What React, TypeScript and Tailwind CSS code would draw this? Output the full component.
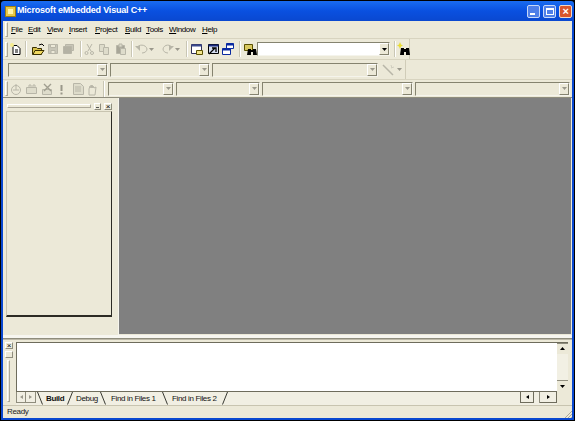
import React from "react";

function Arrow({ on = false }: { on?: boolean }) {
  return (
    <svg width="5" height="3" viewBox="0 0 5 3">
      <path d="M0 0h5L2.5 3z" fill={on ? "#000" : "#9a988c"} />
    </svg>
  );
}

function Combo({ w, on = false }: { w: string; on?: boolean }) {
  return (
    <div
      className={`${w} h-[14px] shrink-0 flex justify-end items-center border border-t-[#85836f] border-l-[#85836f] border-r-[#f5f4ec] border-b-[#f5f4ec] ${on ? "bg-white" : "bg-[#ece9d8]"}`}
    >
      <div className="w-[10px] h-[12px] flex items-center justify-center bg-[#ece9d8] border-r border-b border-r-[#85836f] border-b-[#85836f] border-t border-l border-t-white border-l-white">
        <Arrow on={on} />
      </div>
    </div>
  );
}

function Sep({ m }: { m: string }) {
  return <div className={`${m} w-[2px] h-[16px] shrink-0 border-l border-l-[#c9c6b4] border-r border-r-white`} />;
}

function Ico({ children, w = 15 }: { children: React.ReactNode; w?: number }) {
  return (
    <svg width={w} height="14" viewBox={`0 0 ${w} 14`} className="shrink-0">
      {children}
    </svg>
  );
}

const gr = "#b8b6a8";
const IconNew = () => (
  <Ico>
    <path d="M5 3.5h4l3 3v6H5z" fill="#fff" stroke="#000" />
    <path d="M7 8h3M7 10h3" stroke="#000" />
    <circle cx="4" cy="3" r="2" fill="#f6ec8c" />
  </Ico>
);
const IconOpen = () => (
  <Ico>
    <path d="M1.5 12.5v-7h4l1 1h4v6z" fill="#d8c24c" stroke="#3a3000" />
    <path d="M2 12.5l2-4h9l-3 4z" fill="#f0d860" stroke="#3a3000" />
    <path d="M8 3l3-1 2 2" stroke="#000" fill="none" />
  </Ico>
);
const IconSave = () => (
  <Ico>
    <path d="M2.5 2.5h9v9h-9z" fill="#c8c6b8" stroke={gr} />
    <path d="M4.5 2.5h5v3h-5zM5 8.5h4v3H5z" fill="#ece9d8" stroke={gr} />
  </Ico>
);
const IconSaveAll = () => (
  <Ico>
    <path d="M4.5 2.5h8v6h-8z" fill="#c8c6b8" stroke={gr} />
    <path d="M2.5 4.5h8v7h-8z" fill="#b4b2a4" stroke={gr} />
  </Ico>
);
const IconCut = () => (
  <Ico>
    <path d="M5 2l4 7M10 2L6 9" stroke={gr} fill="none" />
    <circle cx="4.5" cy="11" r="1.5" fill="none" stroke={gr} />
    <circle cx="10" cy="11" r="1.5" fill="none" stroke={gr} />
  </Ico>
);
const IconCopy = () => (
  <Ico>
    <path d="M2.5 2.5h5v7h-5z" fill="#dedccb" stroke={gr} />
    <path d="M6.5 5.5h5v7h-5z" fill="#dedccb" stroke={gr} />
  </Ico>
);
const IconPaste = () => (
  <Ico>
    <path d="M2.5 3.5h8v8h-8z" fill="#a8a698" stroke={gr} />
    <path d="M5 2h3v3H5z" fill="#dedccb" stroke={gr} />
    <path d="M6.5 6.5h5v6h-5z" fill="#dedccb" stroke={gr} />
  </Ico>
);
const IconUndo = () => (
  <Ico w={13}>
    <path d="M2 6c1-4 9-4 10 1 0 2-2 4-5 4" fill="none" stroke={gr} />
    <path d="M0 4h5v5z" fill={gr} />
  </Ico>
);
const IconRedo = () => (
  <Ico w={13}>
    <path d="M11 6C10 2 3 2 2 7c0 2 2 4 5 4" fill="none" stroke={gr} />
    <path d="M13 4H8v5z" fill={gr} />
  </Ico>
);
const IconWs = () => (
  <Ico>
    <path d="M1.5 2.5h10v9h-10z" fill="#fff" stroke="#30305a" />
    <path d="M1.5 2.5h10v2h-10z" fill="#3a4a90" />
    <path d="M6.5 8.5h6v4h-6z" fill="#f2e48c" stroke="#5a5000" />
  </Ico>
);
const IconOut = () => (
  <Ico>
    <path d="M2.5 2.5h10v9h-10z" fill="#d4dcf0" stroke="#000" />
    <path d="M2.5 2.5h10v2h-10z" fill="#1a2a80" />
    <path d="M3 12l6-6M6 6h4v4" stroke="#000" strokeWidth="1.3" fill="none" />
  </Ico>
);
const IconWin = () => (
  <Ico>
    <path d="M5.5 1.5h7v5h-7z" fill="#fff" stroke="#0a2aa0" />
    <path d="M1.5 6.5h8v6h-8z" fill="#fff" stroke="#0a2aa0" />
    <path d="M5.5 1.5h7v2h-7zM1.5 6.5h8v2h-8z" fill="#0a2aa0" />
  </Ico>
);
const IconFind = () => (
  <Ico>
    <path d="M1.5 2.5h8v6h-8z" fill="#d8c860" stroke="#5a5000" />
    <path d="M5 7h3v6H4zM10 7h3l1 6h-4z" fill="#000" />
    <path d="M7 8h4v2H7z" fill="#000" />
  </Ico>
);
const IconBino = () => (
  <Ico>
    <path d="M2 0l1 2.5 2 1-2 1L2 7 1 4.5l-2-1 2-1z" fill="#e8dc30" transform="translate(2 0)" />
    <path d="M5 6h3v7H4zM10 6h3l1 7h-4z" fill="#000" />
    <path d="M7 7h4v3H7z" fill="#000" />
  </Ico>
);
const IconWand = () => (
  <Ico>
    <path d="M2 2l10 10" stroke={gr} strokeWidth="1.5" />
    <path d="M10 2l1 3M13 4l-3 1" stroke="#d0cebf" />
  </Ico>
);
const IconCompile = () => (
  <Ico>
    <circle cx="7" cy="8" r="4.5" fill="none" stroke={gr} />
    <path d="M7 2v6M4 8h6" stroke={gr} />
  </Ico>
);
const IconBuild = () => (
  <Ico>
    <path d="M2.5 5.5h10v6h-10z" fill="#dedccb" stroke={gr} />
    <path d="M5 5V3h2v2M9 5V3h2v2" stroke={gr} fill="none" />
  </Ico>
);
const IconStop = () => (
  <Ico>
    <path d="M2.5 7.5h9v5h-9z" fill="#dedccb" stroke={gr} />
    <path d="M4 2l7 7M11 2L4 9" stroke="#a09e90" strokeWidth="1.4" />
  </Ico>
);
const IconBang = () => (
  <Ico>
    <path d="M6.5 3h2v6h-2zM6.5 10.5h2v2h-2z" fill="#9a988a" />
  </Ico>
);
const IconDoc = () => (
  <Ico>
    <path d="M2.5 1.5h7l3 3v8h-10z" fill="#dedccb" stroke={gr} />
    <path d="M4 5h6M4 7h6M4 9h6" stroke={gr} />
  </Ico>
);
const IconHand = () => (
  <Ico>
    <path d="M4 13V7l1-3 1 2V3l1 3V3l1 3V4l1 2 2-1-1 8z" fill="#ece9d8" stroke={gr} />
  </Ico>
);

const menus: [string, string, string][] = [
  ["F", "ile", "w-[17px]"],
  ["E", "dit", "w-[19px]"],
  ["V", "iew", "w-[22px]"],
  ["I", "nsert", "w-[26px]"],
  ["P", "roject", "w-[30px]"],
  ["B", "uild", "w-[21px]"],
  ["T", "ools", "w-[23px]"],
  ["W", "indow", "w-[33px]"],
  ["H", "elp", "w-[20px]"],
];

const Grip = () => (
  <div className="w-[3px] h-[15px] shrink-0 border border-l-white border-t-white border-r-[#aca899] border-b-[#aca899]" />
);

const Slash = ({ back = false }: { back?: boolean }) => (
  <svg width="6" height="13" viewBox="0 0 6 13" className="shrink-0">
    <path d={back ? "M0.5 0L5.5 12.5" : "M5.5 0L0.5 12.5"} stroke="#3a3a32" fill="none" />
  </svg>
);

export default function App() {
  return (
    <div
      className="w-[575px] h-[421px] overflow-hidden flex flex-col bg-black text-black text-[8px] tracking-[-0.35px]"
      style={{ fontFamily: '"Liberation Sans", Arial, sans-serif' }}
    >
      {/* title bar */}
      <div className="mx-px mt-px h-[20px] shrink-0 flex items-center pl-[4px] pr-[2px] rounded-t-[3px] bg-gradient-to-b from-[#1a6cf0] via-[#0a50e0] to-[#0a48d0]">
        <div className="w-[11px] h-[11px] bg-[#e8c848] border border-[#a08010] flex items-center justify-center">
          <div className="w-[5px] h-[5px] bg-[#fff3a8]" />
        </div>
        <div className="ml-[1px] text-white font-bold text-[9px] tracking-[-0.2px]">Microsoft eMbedded Visual C++</div>
        <div className="ml-auto flex gap-[3px]">
          <div className="w-[13px] h-[13px] rounded-[2px] border border-[#c8d8f8] bg-[#4f7fe8] flex items-end pl-[2px] pb-[2px]">
            <div className="w-[5px] h-[2px] bg-white" />
          </div>
          <div className="w-[13px] h-[13px] rounded-[2px] border border-[#c8d8f8] bg-[#4f7fe8] flex items-center justify-center">
            <div className="w-[8px] h-[7px] border border-white border-t-2" />
          </div>
          <div className="w-[13px] h-[13px] rounded-[2px] border border-[#f0d8c8] bg-[#d8562c] flex items-center justify-center text-white font-bold text-[11px] leading-none">
            ×
          </div>
        </div>
      </div>

      {/* window frame */}
      <div className="mx-px mb-px flex-1 min-h-0 flex flex-col bg-[#ece9d8] border-x-2 border-b-2 border-[#0a48d0]">
        {/* menu */}
        <div className="h-[18px] shrink-0 flex items-center pl-[2px] border-b border-b-[#d8d4c0]">
          <Grip />
          <div className="flex ml-[3px]">
            {menus.map(([a, b, w]) => (
              <div key={a + b} className={`${w} shrink-0`}>
                <span className="underline">{a}</span>
                {b}
              </div>
            ))}
          </div>
        </div>

        {/* toolbar 1 */}
        <div className="h-[21px] shrink-0 flex items-center border-b border-b-[#d8d4c0]">
          <div className="w-[407px] h-full flex items-center pl-[2px] border-r border-r-[#d0ccb8]">
            <Grip />
            <IconNew />
            <Sep m="ml-[2px]" />
            <div className="ml-[4px] flex"><IconOpen /><IconSave /><IconSaveAll /></div>
            <Sep m="ml-[4px]" />
            <IconCut />
            <IconCopy />
            <div className="ml-[2px]"><IconPaste /></div>
            <Sep m="ml-[2px]" />
            <div className="ml-[2px] flex items-center gap-[1px]"><IconUndo /><Arrow /></div>
            <div className="ml-[7px] flex items-center gap-[1px]"><IconRedo /><Arrow /></div>
            <Sep m="ml-[6px]" />
            <div className="ml-[2px]"><IconWs /></div>
            <div className="ml-[1px]"><IconOut /></div>
            <IconWin />
            <Sep m="ml-[3px]" />
            <div className="ml-[2px]"><IconFind /></div>
            <div className="-ml-px"><Combo w="w-[133px]" on /></div>
            <Sep m="ml-[4px]" />
            <IconBino />
          </div>
        </div>

        {/* toolbar 2 */}
        <div className="h-[20px] shrink-0 flex items-center border-b border-b-[#d8d4c0]">
          <div className="w-[403px] h-full flex items-center pl-[5px] border-r border-r-[#d0ccb8] gap-[2px]">
            <Combo w="w-[100px]" />
            <Combo w="w-[100px]" />
            <Combo w="w-[166px]" />
            <div className="ml-[1px] flex items-center gap-[1px]"><IconWand /><Arrow /></div>
          </div>
        </div>

        {/* toolbar 3 */}
        <div className="h-[18px] shrink-0 flex items-center pl-[2px] border-b border-b-[#8f8d7d]">
          <Grip />
          <div className="ml-[1px]"><IconCompile /></div>
          <IconBuild />
          <div className="ml-px"><IconStop /></div>
          <div className="-ml-px"><IconBang /></div>
          <div className="ml-[2px]"><IconDoc /></div>
          <div className="-ml-px"><IconHand /></div>
          <Sep m="ml-[3px]" />
          <div className="flex gap-[2px] ml-[3px]">
            <Combo w="w-[66px]" />
            <Combo w="w-[84px]" />
            <Combo w="w-[151px]" />
            <Combo w="w-[155px]" />
          </div>
        </div>

        {/* middle */}
        <div className="flex-1 min-h-0 flex">
          <div className="w-[116px] shrink-0 flex flex-col pl-[3px] pr-[6px] border-r border-r-[#f6f5ee]">
            <div className="h-[13px] shrink-0 flex items-center gap-[3px] pl-px pt-[3px]">
              <div className="w-[84px] h-[4px] border border-t-white border-l-white border-r-[#aca899] border-b-[#aca899]" />
              <div className="w-[7px] h-[7px] border border-[#8f8d7d] border-t-white border-l-white">
                <div className="w-[3px] h-px bg-[#555] mt-[3px] ml-px" />
              </div>
              <div className="w-[8px] h-[7px] leading-[6px] text-[8px] text-center border border-[#8f8d7d] border-t-white border-l-white">×</div>
            </div>
            <div className="h-[206px] shrink-0 border-x border-t border-b-2 border-t-[#c8c4b0] border-l-[#c8c4b0] border-b-[#2c2b24] border-r-[#2c2b24] bg-[#ece9d8]" />
          </div>
          <div className="flex-1 bg-[#808080] mb-px mr-px" />
        </div>

        {/* separator */}
        <div className="h-[3px] shrink-0 bg-[#f7f6f0]" />
        <div className="h-[2px] shrink-0 border-t border-t-[#8f8d7d] border-b border-b-[#bdb9a8]" />

        {/* output panel */}
        <div className="h-[65px] shrink-0 flex pt-[2px]">
          <div className="w-[13px] shrink-0 pl-[2px] flex flex-col gap-[2px]">
            <div className="w-[8px] h-[7px] leading-[6px] text-[8px] text-center border border-[#8f8d7d] border-t-white border-l-white">×</div>
            <div className="w-[8px] h-[7px] border border-[#8f8d7d] border-t-white border-l-white" />
            <div className="ml-[2px] w-[3px] h-[42px] border border-t-white border-l-white border-r-[#aca899] border-b-[#aca899]" />
          </div>
          <div className="flex-1 min-w-0 flex flex-col mr-[4px]">
            <div className="flex-1 min-h-0 flex border-t border-l border-t-[#6e6c5c] border-l-[#6e6c5c]">
              <div className="flex-1 bg-white" />
              <div className="w-[11px] shrink-0 flex flex-col justify-between bg-[#f2f0e4]">
                <div className="h-[11px] bg-[#ece9d8] border-b border-b-[#8f8d7d] flex items-center justify-center rotate-180"><Arrow on /></div>
                <div className="h-[11px] bg-[#ece9d8] border-t border-t-[#8f8d7d] flex items-center justify-center"><Arrow on /></div>
              </div>
            </div>
            {/* tabs */}
            <div className="h-[14px] shrink-0 flex border-t border-t-[#6e6c5c] mr-[11px] text-[#111] bg-[#f1efe3]">
              <div className="flex items-start">
                <div className="w-[10px] h-[11px] flex items-center justify-center border border-t-0 border-[#8f8d7d]"><span className="w-0 h-0 border-y-[2.5px] border-y-transparent border-r-[3px] border-r-[#9a988c]" /></div>
                <div className="w-[10px] h-[11px] flex items-center justify-center border-r border-b border-[#8f8d7d]"><span className="w-0 h-0 border-y-[2.5px] border-y-transparent border-l-[3px] border-l-[#9a988c]" /></div>
              </div>
              <div className="ml-px"><Slash back /></div>
              <div className="h-[13px] ml-[2px] w-[22px] flex items-center font-bold pl-px">Build</div>
              <Slash />
              <div className="h-[13px] ml-[3px] w-[24px] flex items-center">Debug</div>
              <Slash back />
              <div className="h-[13px] ml-[5px] w-[51px] flex items-center">Find in Files 1</div>
              <Slash back />
              <div className="h-[13px] ml-[4px] w-[50px] flex items-center">Find in Files 2</div>
              <Slash />
              <div className="flex-1" />
              <div className="flex items-start">
                <div className="w-[14px] h-[11px] flex items-center justify-center border border-t-0 border-[#6e6c5c]"><span className="w-0 h-0 border-y-[2.5px] border-y-transparent border-r-[3px] border-r-black" /></div>
                <div className="w-[6px] h-[11px] border-r border-r-[#8f8d7d]" />
                <div className="w-[17px] h-[11px] flex items-center justify-center border-r border-b border-[#6e6c5c]"><span className="w-0 h-0 border-y-[2.5px] border-y-transparent border-l-[3px] border-l-black" /></div>
              </div>
            </div>
          </div>
        </div>

        {/* status bar */}
        <div className="h-[13px] shrink-0 flex items-center justify-between pl-[4px] border-t border-t-[#c8c4b0] text-[#222]">
          <span>Ready</span>
          <svg width="8" height="8" viewBox="0 0 8 8" className="self-end">
            <path d="M8 1L1 8M8 4L4 8M8 7L7 8" stroke="#aca899" />
          </svg>
        </div>
      </div>
    </div>
  );
}
